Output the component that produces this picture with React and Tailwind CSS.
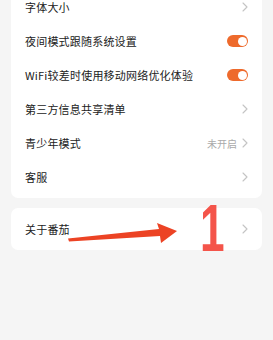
const font = { fontFamily: '"Noto Sans CJK SC", "Liberation Sans", sans-serif' }

function Chevron() {
  return (
    <svg width="6" height="10" viewBox="0 0 6 10" className="shrink-0">
      <path d="M1 1l4 4-4 4" fill="none" stroke="#c4c4c4" strokeWidth="1.1" strokeLinecap="round" strokeLinejoin="round" />
    </svg>
  )
}

function Toggle() {
  return (
    <div className="w-[21px] h-[12px] rounded-full bg-[#ee6a2c] flex items-center justify-end pr-[1.5px]">
      <div className="w-[9px] h-[9px] rounded-full bg-white" />
    </div>
  )
}

function Row({ label, right, value }) {
  return (
    <div className="h-[34px] flex items-center justify-between pl-[14px] pr-[14px]">
      <span className="text-[11px] text-[#222] tracking-[0.2px]">{label}</span>
      <div className="flex items-center gap-[5px]">
        {value && <span className="text-[10px] text-[#aaa]">{value}</span>}
        {right === 'toggle' ? <Toggle /> : <Chevron />}
      </div>
    </div>
  )
}

export default function App() {
  const rows = [
    { label: '字体大小' },
    { label: '夜间模式跟随系统设置', right: 'toggle' },
    { label: 'WiFi较差时使用移动网络优化体验', right: 'toggle' },
    { label: '第三方信息共享清单' },
    { label: '青少年模式', value: '未开启' },
    { label: '客服' },
  ]

  return (
    <div className="relative w-[273px] h-[340px] overflow-hidden bg-[#f5f5f5]" style={font}>
      <div className="px-[11px] flex flex-col gap-[10px] -mt-[14px]">
        <div className="bg-white rounded-[7px] py-1">
          {rows.map(r => <Row key={r.label} {...r} />)}
        </div>
        <div className="bg-white rounded-[7px] py-1">
          <Row label="关于番茄" />
        </div>
      </div>

      <svg className="absolute left-0 top-0" width="273" height="340" viewBox="0 0 273 340">
        <polygon points="68,238.5 159,229 157,223 177,231 161,243 160,236 69,241.5" fill="#ec4324" />
      </svg>

      <div
        className="absolute left-[200px] top-[194px] text-[67px] leading-none font-bold text-[#f4544a] origin-left scale-x-[0.66]"
        style={{ fontFamily: '"Liberation Sans", sans-serif' }}
      >
        1
      </div>
    </div>
  )
}
